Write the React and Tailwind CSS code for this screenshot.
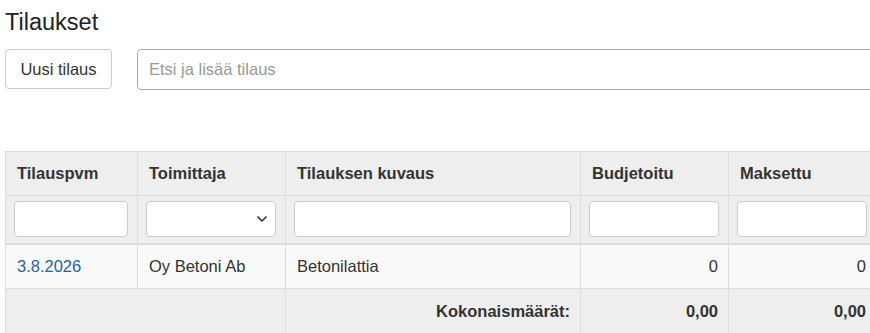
import { ChevronDown } from "lucide-react";

const rows = [
  { id: 1, date: "3.8.2026", supplier: "Oy Betoni Ab", desc: "Betonilattia", budget: "0", paid: "0" },
];

export default function App() {
  return (
    <div
      className="w-[870px] h-[333px] overflow-hidden bg-white text-[#333]"
      style={{ fontFamily: '"Liberation Sans", Arial, sans-serif' }}
    >
      <div className="pl-[5px] w-[1000px]">
        {/* ---------------- TITLE ---------------- */}
        <h1 className="pt-[9px] text-[23.5px] leading-[27px] text-[#222]">Tilaukset</h1>

        {/* ---------------- TOOLBAR ---------------- */}
        <div className="mt-[13px] flex items-start gap-[25px]">
          <button className="h-[40px] w-[107px] text-[16.5px] border border-[#ccc] rounded-[4px] bg-white text-[#333]">
            Uusi tilaus
          </button>
          <input
            className="h-[41px] w-[760px] px-[11px] text-[16.5px] border border-[#aaa] rounded-[4px] placeholder:text-[#999] outline-none"
            placeholder="Etsi ja lisää tilaus"
          />
        </div>

        {/* ---------------- ORDERS TABLE ---------------- */}
        <table className="mt-[61px] table-fixed border-collapse text-[16.5px]" style={{ width: 871 }}>
          <colgroup>
            <col className="w-[132px]" />
            <col className="w-[148px]" />
            <col className="w-[295px]" />
            <col className="w-[148px]" />
            <col className="w-[148px]" />
          </colgroup>
          <thead>
            <tr className="bg-[#eee] text-left font-bold">
              <th className="h-[44px] px-[11px] border border-[#ddd]">Tilauspvm</th>
              <th className="h-[44px] px-[11px] border border-[#ddd]">Toimittaja</th>
              <th className="h-[44px] px-[11px] border border-[#ddd]">Tilauksen kuvaus</th>
              <th className="h-[44px] px-[11px] border border-[#ddd]">Budjetoitu</th>
              <th className="h-[44px] px-[11px] border border-[#ddd]">Maksettu</th>
            </tr>
            <tr className="bg-[#eee]">
              <td className="h-[48px] pl-[8px] pr-[9px] border border-[#ddd] border-b-2">
                <input className="block w-full h-[36px] bg-white border border-[#ccc] rounded-[4px]" />
              </td>
              <td className="h-[48px] pl-[8px] pr-[9px] border border-[#ddd] border-b-2">
                <div className="relative w-full h-[36px] bg-white border border-[#ccc] rounded-[4px]">
                  <ChevronDown
                    className="absolute right-[5px] top-[9px] text-[#333]"
                    size={16}
                    strokeWidth={2.5}
                  />
                </div>
              </td>
              <td className="h-[48px] pl-[8px] pr-[9px] border border-[#ddd] border-b-2">
                <input className="block w-full h-[36px] bg-white border border-[#ccc] rounded-[4px]" />
              </td>
              <td className="h-[48px] pl-[8px] pr-[9px] border border-[#ddd] border-b-2">
                <input className="block w-full h-[36px] bg-white border border-[#ccc] rounded-[4px]" />
              </td>
              <td className="h-[48px] pl-[8px] pr-[9px] border border-[#ddd] border-b-2">
                <input className="block w-full h-[36px] bg-white border border-[#ccc] rounded-[4px]" />
              </td>
            </tr>
          </thead>
          <tbody>
            {rows.map((row) => (
              <tr key={row.id} className="bg-[#f9f9f9]">
                <td className="h-[45px] px-[11px] border border-[#ddd] text-[#1f63a8]">{row.date}</td>
                <td className="h-[45px] px-[11px] border border-[#ddd]">{row.supplier}</td>
                <td className="h-[45px] px-[11px] border border-[#ddd]">{row.desc}</td>
                <td className="h-[45px] px-[10px] border border-[#ddd] text-right">{row.budget}</td>
                <td className="h-[45px] px-[10px] border border-[#ddd] text-right">{row.paid}</td>
              </tr>
            ))}
          </tbody>
          <tfoot>
            <tr className="bg-[#eee] font-bold">
              <td className="h-[45px] border border-[#ddd]" colSpan={2}></td>
              <td className="h-[45px] px-[10px] border border-[#ddd] text-right">Kokonaismäärät:</td>
              <td className="h-[45px] px-[10px] border border-[#ddd] text-right">0,00</td>
              <td className="h-[45px] px-[10px] border border-[#ddd] text-right">0,00</td>
            </tr>
          </tfoot>
        </table>
      </div>
    </div>
  );
}
